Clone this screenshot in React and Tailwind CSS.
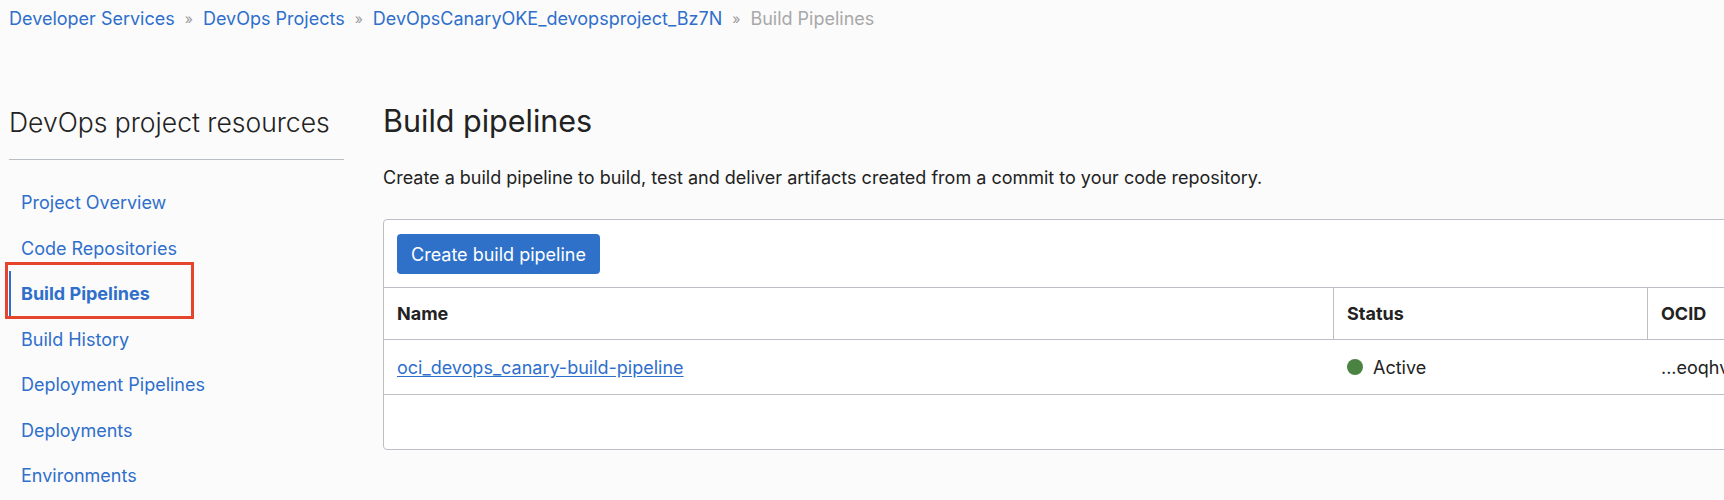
export default function App() {
  const navItems = [
    'Project Overview',
    'Code Repositories',
    'Build Pipelines',
    'Build History',
    'Deployment Pipelines',
    'Deployments',
    'Environments',
  ];

  return (
    <div className="min-h-[500px] bg-[#fbfbfb] overflow-hidden font-['Inter',sans-serif] text-[18px] text-[#222]">
      {/* Breadcrumbs */}
      <nav className="flex items-center h-[37px] pl-[9px] whitespace-nowrap">
        <a className="text-[#2f6fcb]">Developer Services</a>
        <span className="mx-[10px] text-[#9a9a9a] text-[14px]">»</span>
        <a className="text-[#2f6fcb]">DevOps Projects</a>
        <span className="mx-[10px] text-[#9a9a9a] text-[14px]">»</span>
        <a className="text-[#2f6fcb]">DevOpsCanaryOKE_devopsproject_Bz7N</a>
        <span className="mx-[10px] text-[#9a9a9a] text-[14px]">»</span>
        <span className="text-[#a8a8a8]">Build Pipelines</span>
      </nav>

      <div className="flex">
        {/* Sidebar */}
        <aside className="w-[335px] ml-[9px] shrink-0">
          <h2 className="mt-[67px] h-[36px] leading-[36px] text-[26.5px] font-light text-[#222] whitespace-nowrap">
            DevOps project resources
          </h2>
          <div className="mt-[19px] h-px bg-[#b9bdc4]" />
          <ul className="mt-[20px]">
            {navItems.map((item) =>
              item === 'Build Pipelines' ? (
                <li key={item} className="relative h-[45.5px] flex items-center border-l-2 border-[#2f6fcb] pl-[10px] font-bold text-[#2f6fcb]">
                  {item}
                  <div className="absolute left-[-6px] top-[-9px] w-[189px] h-[57px] border-[3px] border-[#e5452d]" />
                </li>
              ) : (
                <li key={item} className="h-[45.5px] flex items-center pl-[12px] text-[#2f6fcb]">
                  {item}
                </li>
              )
            )}
          </ul>
        </aside>

        {/* Main content */}
        <main className="ml-[39px] flex-1 min-w-0">
          <h1 className="mt-[66px] h-[36px] leading-[36px] text-[30.5px] text-[#222]">Build pipelines</h1>
          <p className="mt-[27px] leading-[24px] whitespace-nowrap">
            Create a build pipeline to build, test and deliver artifacts created from a commit to your code repository.
          </p>

          <div className="mt-[29px] w-[1500px] bg-white border border-[#bcc0c6] rounded-[4px]">
            <div className="pt-[14px] pb-[13px] pl-[13px]">
              <button className="h-[40px] px-[14px] rounded-[4px] bg-[#2f71c9] text-white">
                Create build pipeline
              </button>
            </div>

            <div className="grid grid-cols-[949px_314px_1fr] border-t border-[#bcc0c6] font-bold">
              <div className="h-[51px] flex items-center pl-[13px]">Name</div>
              <div className="h-[51px] flex items-center pl-[13px] border-l border-[#bcc0c6]">Status</div>
              <div className="h-[51px] flex items-center pl-[13px] border-l border-[#bcc0c6]">OCID</div>
            </div>

            <div className="grid grid-cols-[949px_314px_1fr] border-t border-[#bcc0c6]">
              <div className="h-[54px] flex items-center pl-[13px]">
                <a className="text-[#2f6fcb] underline underline-offset-2">oci_devops_canary-build-pipeline</a>
              </div>
              <div className="h-[54px] flex items-center pl-[14px] gap-[10px]">
                <span className="w-[16px] h-[16px] rounded-full bg-[#4b8442]" />
                Active
              </div>
              <div className="h-[54px] flex items-center pl-[14px]">...eoqhv</div>
            </div>

            <div className="h-[55px] border-t border-[#bcc0c6]" />
          </div>
        </main>
      </div>
    </div>
  );
}
